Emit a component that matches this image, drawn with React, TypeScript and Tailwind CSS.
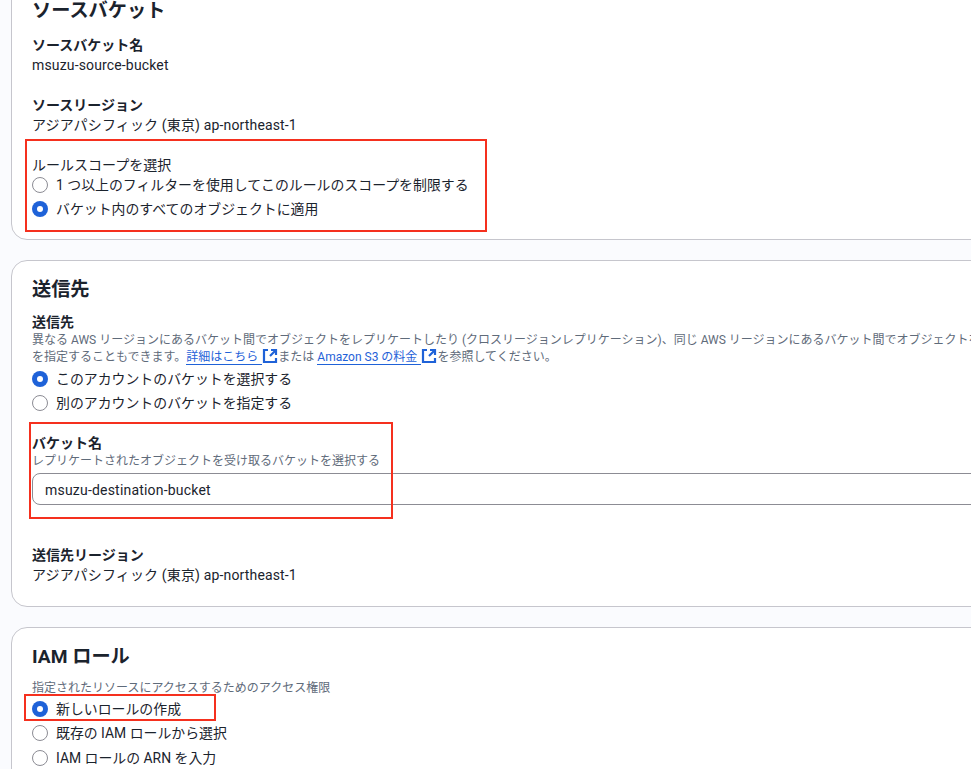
const FONT = "[font-family:'Roboto','Noto_Sans_CJK_JP',sans-serif]";

function Radio({ checked, label, className = "" }: { checked?: boolean; label: string; className?: string }) {
  return (
    <div className={`flex h-6 items-center gap-2 text-[13.9px] leading-5 text-[#1b232d] ${className}`}>
      {checked ? (
        <span className="flex h-4 w-4 shrink-0 items-center justify-center rounded-full bg-[#1f62d8]">
          <span className="h-1.5 w-1.5 rounded-full bg-white" />
        </span>
      ) : (
        <span className="h-4 w-4 shrink-0 rounded-full border border-[#8c8c94] bg-white" />
      )}
      <span>{label}</span>
    </div>
  );
}

function Label({ children, className = "" }: { children: string; className?: string }) {
  return <div className={`text-[14px] font-bold leading-5 text-[#1b232d] ${className}`}>{children}</div>;
}

function Value({ children }: { children: string }) {
  return <div className="text-[14px] leading-5 tracking-[0.15px] text-[#1b232d]">{children}</div>;
}

function Hint({ children }: { children: React.ReactNode }) {
  return <div className="whitespace-nowrap text-[12px] leading-4 text-[#5f6b7a]">{children}</div>;
}

function ExternalIcon() {
  return (
    <svg viewBox="0 0 16 16" className="inline-block h-4 w-4 align-[-3px]" fill="none" stroke="#1f62d8" strokeWidth="2.2">
      <path d="M6 2H2v12h12v-4" />
      <path d="M9 2h5v5M14 2 8 8" />
    </svg>
  );
}

function DocLink({ children }: { children: string }) {
  return <span className="border-b border-[#1f62d8] pr-1 text-[#1f62d8]">{children}</span>;
}

function Card({ className, children }: { className: string; children: React.ReactNode }) {
  return (
    <section className={`ml-[11px] w-[1200px] rounded-2xl border border-[#c6c6cd] bg-white pl-5 ${className}`}>
      {children}
    </section>
  );
}

const HEADING = "text-[19.2px] font-bold leading-7 text-[#1b232d]";

export default function App() {
  return (
    <div className={`relative h-[769px] w-[971px] overflow-hidden bg-[#fafbfe] ${FONT}`}>
      <Card className="-mt-[20px] h-[260px] pt-[16px]">
        <h2 className={HEADING}>ソースバケット</h2>
        <Label className="mt-[10px]">ソースバケット名</Label>
        <Value>msuzu-source-bucket</Value>
        <Label className="mt-[20px]">ソースリージョン</Label>
        <Value>アジアパシフィック (東京) ap-northeast-1</Value>
        <div className="mt-[20px] text-[14px] leading-5 text-[#1b232d]">ルールスコープを選択</div>
        <div className="-mt-[2px]">
          <Radio label="1 つ以上のフィルターを使用してこのルールのスコープを制限する" />
          <Radio checked label="バケット内のすべてのオブジェクトに適用" />
        </div>
      </Card>

      <Card className="mt-[20px] h-[347px] pt-[15px]">
        <h2 className={HEADING}>送信先</h2>
        <Label className="mt-[8px]">送信先</Label>
        <Hint>異なる AWS リージョンにあるバケット間でオブジェクトをレプリケートしたり (クロスリージョンレプリケーション)、同じ AWS リージョンにあるバケット間でオブジェクトをレプリケートしたり</Hint>
        <Hint>
          を指定することもできます。<DocLink>詳細はこちら</DocLink>
          <ExternalIcon />または <DocLink>Amazon S3 の料金</DocLink>
          <ExternalIcon />を参照してください。
        </Hint>
        <div className="mt-[2px]">
          <Radio checked label="このアカウントのバケットを選択する" />
          <Radio label="別のアカウントのバケットを指定する" />
        </div>
        <Label className="mt-[18px]">バケット名</Label>
        <Hint>レプリケートされたオブジェクトを受け取るバケットを選択する</Hint>
        <div className="mt-[4px] flex h-8 items-center rounded-lg border border-[#8c8c94] bg-white pl-3 pt-[2px] text-[14px] tracking-[0.2px] text-[#1b232d]">
          msuzu-destination-bucket
        </div>
        <Label className="mt-[40px]">送信先リージョン</Label>
        <Value>アジアパシフィック (東京) ap-northeast-1</Value>
      </Card>

      <Card className="mt-[20px] h-[300px] pt-[15px]">
        <h2 className={HEADING}>IAM ロール</h2>
        <div className="mt-[9px]">
          <Hint>指定されたリソースにアクセスするためのアクセス権限</Hint>
        </div>
        <div className="mt-[1px]">
          <Radio checked label="新しいロールの作成" />
          <Radio label="既存の IAM ロールから選択" />
          <Radio className="mt-px" label="IAM ロールの ARN を入力" />
        </div>
      </Card>

      <div className="absolute left-[25px] top-[139px] h-[93px] w-[462px] border-2 border-[#f5301e]" />
      <div className="absolute left-[29px] top-[422px] h-[97px] w-[364px] border-2 border-[#f5301e]" />
      <div className="absolute left-[24px] top-[694px] h-[27px] w-[192px] border-2 border-[#f5301e]" />
    </div>
  );
}
